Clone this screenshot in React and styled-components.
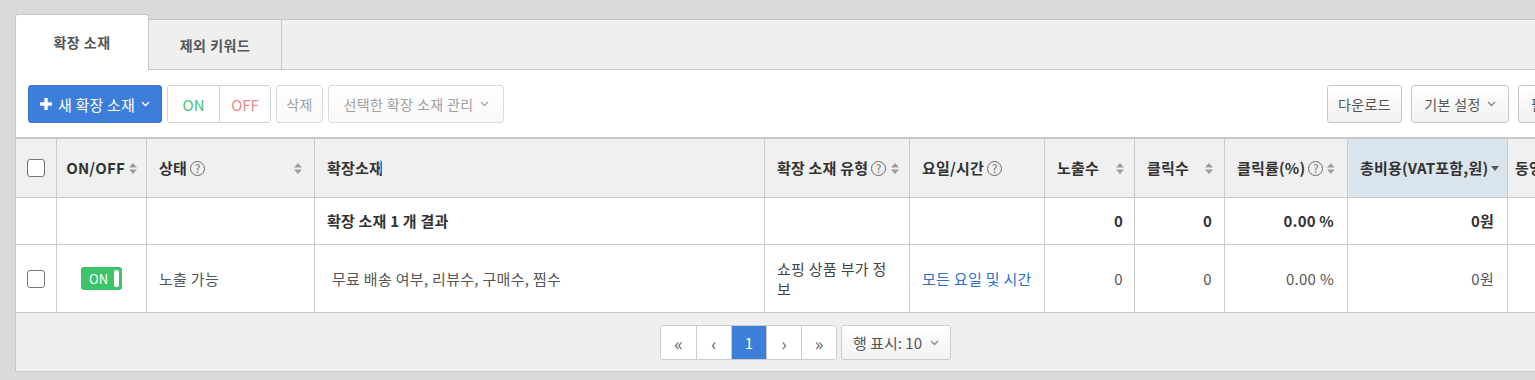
import React from "react";
import styled, { createGlobalStyle, css } from "styled-components";

const GlobalStyle = createGlobalStyle`
  html, body { margin: 0; padding: 0; }
  body {
    background: #dadada;
    font-family: "Noto Sans CJK KR", "Noto Sans", sans-serif;
    width: 1535px;
    height: 380px;
    overflow: hidden;
  }
  * { box-sizing: border-box; }
`;

const Page = styled.div`
  padding: 14px 0 0 15px;
`;

const Panel = styled.div`
  width: 1580px;
`;

const TabBar = styled.div`
  display: flex;
  align-items: flex-start;
  height: 51px;
  margin-top: 5px;
  background: #efefef;
  border-top: 1px solid #c6c6c6;
  border-bottom: 1px solid #c6c6c6;
`;

const Tab = styled.div`
  width: 133px;
  height: 49px;
  display: flex;
  align-items: center;
  justify-content: center;
  font-size: 14px;
  letter-spacing: 0.5px;
  font-weight: 700;
  color: #555;
  border-right: 1px solid #c6c6c6;
  ${(p) =>
    p.$active &&
    css`
      width: 134px;
      height: 56px;
      margin-top: -6px;
      padding-bottom: 1px;
      background: #fff;
      border: 1px solid #c6c6c6;
      border-bottom: none;
      border-radius: 3px 3px 0 0;
    `}
`;

const Body = styled.div`
  background: #fff;
  border-left: 1px solid #c6c6c6;
`;

const Toolbar = styled.div`
  display: flex;
  align-items: center;
  padding: 15px 12px 14px 12px;
  height: 67px;
`;

const Group = styled.div`
  display: flex;
  align-items: center;
  gap: ${(p) => p.$gap || 5}px;
  margin-left: ${(p) => (p.$right ? "auto" : "0")};
`;

const Button = styled.button`
  height: 38px;
  width: ${(p) => (p.$w ? `${p.$w}px` : "auto")};
  display: inline-flex;
  align-items: center;
  justify-content: ${(p) => (p.$start ? "flex-start" : "center")};
  gap: 6px;
  padding: 0 ${(p) => (p.$start ? 12 : 0)}px;
  white-space: nowrap;
  overflow: hidden;
  font-family: inherit;
  font-size: 14px;
  letter-spacing: 0.4px;
  border-radius: 3px;
  border: 1px solid #c9c9c9;
  background: linear-gradient(#ffffff, #f1f1f1);
  color: ${(p) => (p.$muted ? "#a0a0a0" : "#555")};
  ${(p) =>
    p.$muted &&
    css`
      border-color: #dcdcdc;
      background: linear-gradient(#ffffff, #f8f8f8);
    `}
  ${(p) =>
    p.$primary &&
    css`
      font-size: 15px;
      letter-spacing: 0.2px;
      background: #3d7edb;
      border-color: #3a78d2;
      color: #fff;
    `}
`;

const Segmented = styled.div`
  display: flex;
  height: 38px;
  border: 1px solid #d2d2d2;
  border-radius: 3px;
  overflow: hidden;
`;

const Segment = styled.div`
  width: 51px;
  display: flex;
  align-items: center;
  justify-content: center;
  font-size: 15px;
  color: ${(p) => p.$color};
  background: #fff;
  & + & {
    border-left: 1px solid #d2d2d2;
  }
`;

const COLS = "41px 90px 168px 450px 145px 135px 90px 90px 123px 160px 1fr";

const Grid = styled.div`
  border-top: 2px solid #c8c8c8;
`;

const Row = styled.div`
  display: grid;
  grid-template-columns: ${COLS};
  height: ${(p) => p.$h}px;
`;

const Cell = styled.div`
  position: relative;
  display: flex;
  align-items: center;
  justify-content: ${(p) =>
    p.$align === "center"
      ? "center"
      : p.$align === "right"
      ? "flex-end"
      : p.$align === "between"
      ? "space-between"
      : "flex-start"};
  gap: 4px;
  padding: 0 ${(p) => (p.$pr != null ? p.$pr : 12)}px 0 ${(p) => (p.$pl != null ? p.$pl : 12)}px;
  border-right: 1px solid #cbcbcb;
  border-bottom: 1px solid #cbcbcb;
  font-size: 15px;
  letter-spacing: 0.3px;
  line-height: 20px;
  color: #555;
  background: #fff;
  overflow: hidden;
  white-space: nowrap;
  ${(p) =>
    p.$head &&
    css`
      background: ${p.$sorted ? "#d9e4ed" : "#f0f0f0"};
      font-weight: 700;
      letter-spacing: 0.2px;
      color: #333;
    `}
  ${(p) =>
    p.$bold &&
    css`
      font-weight: 700;
      letter-spacing: 0.2px;
      color: #333;
    `}
`;

const Label = styled.span`
  display: inline-flex;
  align-items: center;
  gap: 3px;
  white-space: nowrap;
`;

const Wrap = styled.span`
  white-space: normal;
  word-break: break-all;
  color: #444;
`;

const Link = styled.span`
  color: #2b6fd6;
`;

const Help = styled.span`
  width: 15px;
  height: 15px;
  border-radius: 50%;
  border: 1px solid #6a6a6a;
  display: inline-flex;
  align-items: center;
  justify-content: center;
  font-size: 11px;
  line-height: 1;
  letter-spacing: 0;
  font-weight: 400;
  color: #6a6a6a;
`;

const Checkbox = styled.span`
  width: 18px;
  height: 18px;
  border: 1px solid #777;
  border-radius: 3px;
  background: #fff;
`;

const Toggle = styled.span`
  width: 41px;
  height: 23px;
  border-radius: 3px;
  background: #3cc46c;
  display: flex;
  align-items: center;
  justify-content: space-between;
  padding: 0 3px 0 8px;
  font-size: 13px;
  letter-spacing: 0;
  color: #fff;
  line-height: 1;
`;

const Knob = styled.span`
  width: 5px;
  height: 17px;
  border-radius: 2px;
  background: #fff;
`;

const ResizeMark = styled.span`
  position: absolute;
  left: 65px;
  top: 21px;
  width: 1px;
  height: 13px;
  background: #70a9ea;
`;

const Footer = styled.div`
  display: flex;
  justify-content: center;
  gap: 4px;
  padding-top: 12px;
  height: 59px;
  background: #efefef;
  border-bottom: 1px solid #cdcdcd;
`;

const Pager = styled.div`
  display: flex;
  height: 35px;
  border: 1px solid #cccccc;
  border-radius: 3px;
  overflow: hidden;
  background: #fff;
`;

const PageBtn = styled.span`
  width: 35px;
  display: flex;
  align-items: center;
  justify-content: center;
  font-size: ${(p) => (p.$active ? 15 : 18)}px;
  color: ${(p) => (p.$active ? "#fff" : "#666")};
  background: ${(p) => (p.$active ? "#3c7fd9" : "#fff")};
  & + & {
    border-left: 1px solid #cccccc;
  }
`;

const RowsSelect = styled.span`
  height: 35px;
  width: 110px;
  display: flex;
  align-items: center;
  justify-content: center;
  gap: 8px;
  border: 1px solid #cccccc;
  border-radius: 3px;
  background: linear-gradient(#ffffff, #f2f2f2);
  font-size: 15px;
  color: #555;
`;

const Sort = () => (
  <svg width="8" height="11" viewBox="0 0 8 11">
    <path d="M4 0L8 4.5H0Z" fill="#9b9b9b" />
    <path d="M0 6.5H8L4 11Z" fill="#9b9b9b" />
  </svg>
);

const CaretDown = () => (
  <svg width="8" height="5" viewBox="0 0 8 5">
    <path d="M0 0H8L4 5Z" fill="#555" />
  </svg>
);

const Chevron = ({ color = "#888" }) => (
  <svg width="9" height="6" viewBox="0 0 9 6">
    <path d="M1 1L4.5 4.5L8 1" stroke={color} strokeWidth="1.3" fill="none" />
  </svg>
);

const Plus = () => (
  <svg width="12" height="12" viewBox="0 0 12 12">
    <rect x="4.3" y="0" width="3.4" height="12" fill="#fff" />
    <rect x="0" y="4.3" width="12" height="3.4" fill="#fff" />
  </svg>
);

export default function App() {
  return (
    <>
      <GlobalStyle />
      <Page>
        <Panel>
          <TabBar>
            <Tab $active>확장 소재</Tab>
            <Tab>제외 키워드</Tab>
          </TabBar>
          <Body>
            <Toolbar>
              <Group>
                <Button $primary $w={134}>
                  <Plus />새 확장 소재 <Chevron color="#fff" />
                </Button>
                <Segmented>
                  <Segment $color="#45c07c">ON</Segment>
                  <Segment $color="#f08a8a">OFF</Segment>
                </Segmented>
                <Button $muted $w={47}>삭제</Button>
                <Button $muted $w={176}>
                  선택한 확장 소재 관리 <Chevron color="#aaa" />
                </Button>
              </Group>
              <Group $right $gap={9}>
                <Button $w={75}>다운로드</Button>
                <Button $w={98}>
                  기본 설정 <Chevron />
                </Button>
                <Button $w={65} $start>필터</Button>
              </Group>
            </Toolbar>
            <Grid>
              <Row $h={59}>
                <Cell $head $align="center" $pl={0} $pr={0}>
                  <Checkbox />
                </Cell>
                <Cell $head $align="center" $pl={0} $pr={0}>
                  ON/OFF <Sort />
                </Cell>
                <Cell $head $align="between">
                  <Label>
                    상태 <Help>?</Help>
                  </Label>
                  <Sort />
                </Cell>
                <Cell $head>
                  확장소재
                  <ResizeMark />
                </Cell>
                <Cell $head $align="between" $pr={10}>
                  <Label>
                    확장 소재 유형 <Help>?</Help>
                  </Label>
                  <Sort />
                </Cell>
                <Cell $head>
                  <Label>
                    요일/시간 <Help>?</Help>
                  </Label>
                </Cell>
                <Cell $head $align="between" $pr={10}>
                  노출수 <Sort />
                </Cell>
                <Cell $head $align="between" $pr={11}>
                  클릭수 <Sort />
                </Cell>
                <Cell $head $align="between">
                  <Label>
                    클릭률(%) <Help>?</Help>
                  </Label>
                  <Sort />
                </Cell>
                <Cell $head $sorted>
                  <Label>
                    총비용(VAT포함,원) <CaretDown />
                  </Label>
                </Cell>
                <Cell $head $pl={7}>동영상</Cell>
              </Row>
              <Row $h={47}>
                <Cell />
                <Cell />
                <Cell />
                <Cell $bold>확장 소재 1 개 결과</Cell>
                <Cell />
                <Cell />
                <Cell $bold $align="right" $pr={11}>0</Cell>
                <Cell $bold $align="right">0</Cell>
                <Cell $bold $align="right" $pr={13}>0.00 %</Cell>
                <Cell $bold $align="right" $pr={13}>0원</Cell>
                <Cell />
              </Row>
              <Row $h={68}>
                <Cell $align="center" $pl={0} $pr={0}>
                  <Checkbox />
                </Cell>
                <Cell $align="center" $pl={0} $pr={0}>
                  <Toggle>
                    ON <Knob />
                  </Toggle>
                </Cell>
                <Cell>노출 가능</Cell>
                <Cell $pl={17}>무료 배송 여부, 리뷰수, 구매수, 찜수</Cell>
                <Cell $pr={16}>
                  <Wrap>쇼핑 상품 부가 정보</Wrap>
                </Cell>
                <Cell>
                  <Link>모든 요일 및 시간</Link>
                </Cell>
                <Cell $align="right" $pr={11}>0</Cell>
                <Cell $align="right">0</Cell>
                <Cell $align="right" $pr={13}>0.00 %</Cell>
                <Cell $align="right" $pr={13}>0원</Cell>
                <Cell />
              </Row>
            </Grid>
            <Footer>
              <Pager>
                <PageBtn>«</PageBtn>
                <PageBtn>‹</PageBtn>
                <PageBtn $active>1</PageBtn>
                <PageBtn>›</PageBtn>
                <PageBtn>»</PageBtn>
              </Pager>
              <RowsSelect>
                행 표시: 10 <Chevron />
              </RowsSelect>
            </Footer>
          </Body>
        </Panel>
      </Page>
    </>
  );
}
